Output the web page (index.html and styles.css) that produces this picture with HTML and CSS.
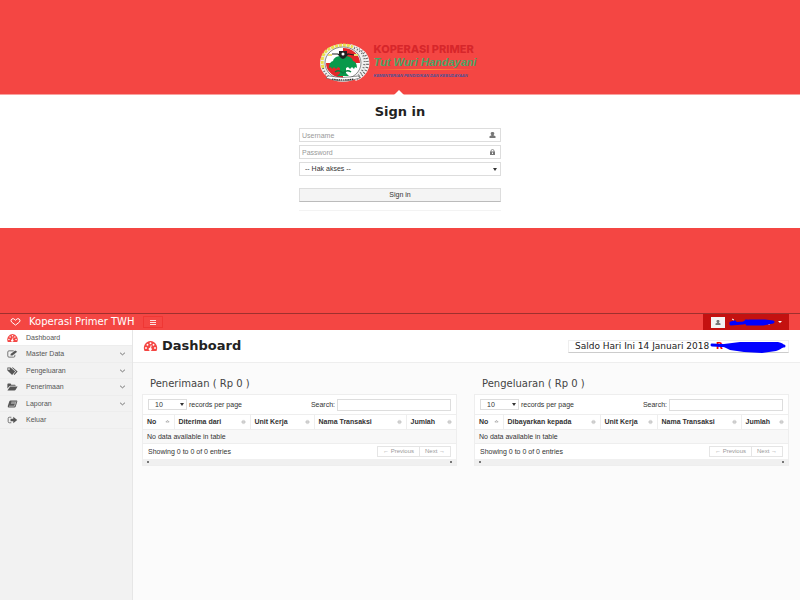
FILE: index.html
```html
<!DOCTYPE html>
<html lang="id">
<head>
<meta charset="utf-8">
<title>Koperasi Primer TWH</title>
<link rel="stylesheet" href="styles.css">
</head>
<body>
<svg class="defs" aria-hidden="true">
  <symbol id="gauge" viewBox="0 0 28 20"><path fill="currentColor" d="M14 0a14 14 0 0 0-12 20h24A14 14 0 0 0 14 0z"/><g fill="#fff"><circle cx="5" cy="14" r="1.900"/><circle cx="8" cy="7.500" r="1.900"/><circle cx="14" cy="4.500" r="1.900"/><circle cx="20" cy="7.500" r="1.900"/><circle cx="23" cy="14" r="1.900"/><path d="M14.500 8.500l2 .5-1.400 5a3 3 0 1 1-2-.5z"/></g></symbol>
  <symbol id="edit" viewBox="0 0 28 20"><path fill="none" stroke="currentColor" stroke-width="2" d="M17 2H5Q2 2 2 5v10q0 3 3 3h12q3 0 3-3v-3"/><path fill="currentColor" d="M9 14v-4L21 1l5 3-12 10z"/></symbol>
  <symbol id="tags" viewBox="0 0 28 20"><path fill="currentColor" fill-rule="evenodd" d="M1 1h8l12 10-8 9L1 9zM5 3a2 2 0 1 0 .1 0z"/><path fill="currentColor" d="M12 1h3l12 10-8 9-2-2 6-7z"/></symbol>
  <symbol id="folder" viewBox="0 0 28 20"><path fill="currentColor" d="M1 14V3q0-2 2-2h6l2 3h9q2 0 2 3H9q-2 0-3 1zM8 9h19l-5 8q-1 2-3 2H1z"/></symbol>
  <symbol id="book" viewBox="0 0 28 20"><path fill="currentColor" d="M9 1h16q2 1 1 3l-4 13q-1 2-3 2H5q-4 0-3-4L6 3q1-2 3-2z"/><path fill="none" stroke="#f2f2f2" stroke-width="1.500" d="M11 5h10M10 8h10M5 15.500h14L23 3"/></symbol>
  <symbol id="exit" viewBox="0 0 28 20"><path fill="none" stroke="currentColor" stroke-width="2" d="M11 3H6Q3 3 3 6v8q0 3 3 3h5"/><path fill="currentColor" d="M9 7h7V2l10 8-10 8v-5H9z"/></symbol>
  <symbol id="user" viewBox="0 0 14 12"><path fill="currentColor" d="M7 0c5 0 4 5 2 6v.5l4 2V12H1V8.500l4-2V6C3 5 2 0 7 0z"/></symbol>
  <symbol id="lock" viewBox="0 0 14 12"><path fill="none" stroke="currentColor" stroke-width="1.600" d="M4 6V4q0-3 3-3t3 3v2"/><path fill="currentColor" fill-rule="evenodd" d="M2 5h10v7H2zM6 7v3h2V7z"/></symbol>
  <symbol id="chevron" viewBox="0 0 8 5"><path fill="none" stroke="currentColor" d="M1 1l3 2.500L7 1"/></symbol>
  <symbol id="sort" viewBox="0 0 6 6"><path fill="none" stroke="#aaa" stroke-width=".7" d="M1 2.500L3 .5l2 2zM1 3.500l2 2 2-2z"/></symbol>
  <symbol id="asc" viewBox="0 0 6 6"><path fill="none" stroke="#999" stroke-width=".8" d="M1 3l2-2 2 2z"/></symbol>
</svg>

<section class="login">
  <header class="brand">
    <svg class="emblem" viewBox="0 0 50 40" role="img" aria-label="Tut Wuri Handayani">
      <defs><clipPath id="disc"><ellipse cx="23" cy="20" rx="17" ry="15"/></clipPath></defs>
      <path d="M30 3Q50 9 47 24q-3 9-12 12" fill="none" stroke="#f5f5f5" stroke-width="4"/>
      <path d="M30 3Q50 9 47 24q-3 9-12 12" fill="none" stroke="#666" stroke-width="3" stroke-dasharray="1 2"/>
      <ellipse cx="23" cy="20" rx="21.500" ry="17.500" fill="#eee" stroke="#eee" stroke-width="3"/>
      <path d="M3 25Q-1 8 14 4q9-4 19 0" fill="none" stroke="#eadf50" stroke-width="3" stroke-dasharray="3 1"/>
      <path d="M3 25q2 7 9 11M34 5q13 5 10 18-2 8-9 12" fill="none" stroke="#666" stroke-width="2" stroke-dasharray="1 2"/>
      <ellipse cx="23" cy="20" rx="18" ry="16" fill="#fff" stroke="#444" stroke-width=".6"/>
      <g clip-path="url(#disc)"><path fill="#e32629" d="M23 4h20v16H23zM4 20h19v17H4z"/></g>
      <path fill="#08994b" d="M16 14Q23 11 30 14Q33 16 33 18Q37 19 37 25L35 24L34 26L32 24L30 26L28 24L26 25V30L29 33H17L20 30V25L18 24L16 26L14 24L12 26L11 24L9 25Q9 19 13 18Q13 16 16 14Z"/>
      <path fill="none" stroke="#222" stroke-width="1.200" d="M12 11h6l2 2h6l2-2 6 1"/>
      <path fill="#222" d="M19 8h8v4q-1 3-4 4-3-1-4-4z"/><circle cx="23" cy="11" r="1.500" fill="#fff"/>
      <path fill="#eadf73" d="M8 11h4v2H8zm26 0h4v2h-4z"/>
      <path fill="none" stroke="#087f40" stroke-width="1.500" d="M15 29q4-3 8 1 4-4 8-1"/>
      <path fill="#fff" stroke="#555" stroke-width=".6" d="M8 33q15 3 30 0l2 2q-17 6-34 0z"/>
      <path fill="none" stroke="#222" stroke-width="1.200" stroke-dasharray="1.500 .7" d="M12 36q11 2 22 0"/>
    </svg>
    <div class="words">
      <div class="word-top">KOPERASI PRIMER</div>
      <div class="word-mid">Tut Wuri Handayani</div>
      <div class="word-line"></div>
      <div class="word-low">KEMENTERIAN PENDIDIKAN DAN KEBUDAYAAN</div>
    </div>
    <span class="notch"></span>
  </header>
  <form class="signin">
    <h1>Sign in</h1>
    <div class="field"><input type="text" placeholder="Username" aria-label="Username"><svg><use href="#user"/></svg></div>
    <div class="field"><input type="password" placeholder="Password" aria-label="Password"><svg><use href="#lock"/></svg></div>
    <div class="pick"><select class="role" aria-label="Hak akses"><option>-- Hak akses --</option></select></div>
    <button type="button" class="submit">Sign in</button>
    <hr>
  </form>
  <div class="band"></div>
</section>

<section class="app">
  <header class="topbar">
    <a class="home" href="#"><svg viewBox="0 0 12 9"><path fill="none" stroke="#fff" stroke-width="1.100" d="M6 8L1.500 4.500Q0 2 2 1q2-1 4 1.500Q8 0 10 1q2 1 .5 3.500z"/></svg>Koperasi Primer TWH</a>
    <button type="button" class="burger" aria-label="Menu"><span></span></button>
    <button type="button" class="account" aria-label="Akun">
      <span class="avatar"><svg><use href="#user"/></svg></span>
      <svg class="name-mark" viewBox="0 0 54 10"><path fill="none" stroke="#fff" stroke-width="1" d="M3 2l2 1M31 8v-3M40 8V5"/><path fill="none" stroke="#00f" stroke-width="3" stroke-linecap="round" stroke-linejoin="round" d="M2 6l4-1-4 2 12-1 7-2 15 0 8 1-10 2H18l14-2-15-1"/><path fill="#fff" d="M49 4h4l-2 2z"/></svg>
    </button>
  </header>
  <div class="body">
    <nav class="side">
      <a class="on" href="#"><svg><use href="#gauge"/></svg><span>Dashboard</span></a>
      <a href="#"><svg><use href="#edit"/></svg><span>Master Data</span><svg class="chev"><use href="#chevron"/></svg></a>
      <a href="#"><svg><use href="#tags"/></svg><span>Pengeluaran</span><svg class="chev"><use href="#chevron"/></svg></a>
      <a href="#"><svg><use href="#folder"/></svg><span>Penerimaan</span><svg class="chev"><use href="#chevron"/></svg></a>
      <a href="#"><svg><use href="#book"/></svg><span>Laporan</span><svg class="chev"><use href="#chevron"/></svg></a>
      <a href="#"><svg><use href="#exit"/></svg><span>Keluar</span></a>
    </nav>
    <main>
      <div class="title">
        <h2><svg><use href="#gauge"/></svg>Dashboard</h2>
        <div class="saldo"><span>Saldo Hari Ini 14 Januari 2018</span><span class="sum"><b>R</b><svg viewBox="0 0 78 12"><path fill="none" stroke="#00f" stroke-width="3" stroke-linecap="round" d="M2 4l20 1 48 0 4 0"/><path fill="#00f" d="M14 3l16-2 38 0q6 1 6 4-2 3-8 5l-14 2-18-1-14-2-8-4z"/></svg></span></div>
      </div>
      <div class="panels">
        <section class="panel">
          <h3>Penerimaan ( Rp 0 )</h3>
          <div class="card">
            <div class="tools"><label class="length"><select><option>10</option></select>records per page</label><label>Search:<input type="text"></label></div>
            <table>
              <colgroup><col class="a1"><col class="a2"><col class="a3"><col class="a4"><col></colgroup>
              <thead><tr><th>No<svg><use href="#asc"/></svg></th><th>Diterima dari<svg><use href="#sort"/></svg></th><th>Unit Kerja<svg><use href="#sort"/></svg></th><th>Nama Transaksi<svg><use href="#sort"/></svg></th><th>Jumlah<svg><use href="#sort"/></svg></th></tr></thead>
              <tbody><tr><td colspan="5">No data available in table</td></tr></tbody>
            </table>
            <div class="foot"><span>Showing 0 to 0 of 0 entries</span><div class="pager"><button type="button">← Previous</button><button type="button">Next →</button></div></div>
            <div class="scroll"><i></i><i></i></div>
          </div>
        </section>
        <section class="panel">
          <h3>Pengeluaran ( Rp 0 )</h3>
          <div class="card">
            <div class="tools"><label class="length"><select><option>10</option></select>records per page</label><label>Search:<input type="text"></label></div>
            <table>
              <colgroup><col class="b1"><col class="b2"><col class="b3"><col class="b4"><col></colgroup>
              <thead><tr><th>No<svg><use href="#asc"/></svg></th><th>Dibayarkan kepada<svg><use href="#sort"/></svg></th><th>Unit Kerja<svg><use href="#sort"/></svg></th><th>Nama Transaksi<svg><use href="#sort"/></svg></th><th>Jumlah<svg><use href="#sort"/></svg></th></tr></thead>
              <tbody><tr><td colspan="5">No data available in table</td></tr></tbody>
            </table>
            <div class="foot"><span>Showing 0 to 0 of 0 entries</span><div class="pager"><button type="button">← Previous</button><button type="button">Next →</button></div></div>
            <div class="scroll"><i></i><i></i></div>
          </div>
        </section>
      </div>
    </main>
  </div>
</section>
</body>
</html>
```
FILE: styles.css
```css
* { box-sizing: border-box; }
body {
  margin: 0;
  min-height: 100vh;
  display: flex;
  flex-direction: column;
  background: #fff;
  color: #333;
  font: 7px/10px "Liberation Sans", Arial, sans-serif;
}
h1, h2, h3 { margin: 0; color: #222; font-family: "DejaVu Sans", sans-serif; }
button, input, select { font: inherit; color: inherit; margin: 0; border-radius: 0; }
input, select { border: 1px solid #ddd; background: #fff; outline: 0; }
select { appearance: none; }
a { color: inherit; text-decoration: none; }
svg { display: block; flex: none; }
.defs { position: absolute; width: 0; height: 0; }

/* Login */
.brand {
  position: relative;
  display: flex;
  justify-content: center;
  gap: 4px;
  padding: 43px 0 11px;
  background: #f44643;
  border-bottom: 1px solid #f9a19f;
}
.emblem { width: 50px; height: 40px; }
.words { width: 107px; white-space: nowrap; }
.word-top { color: #d7262b; font: 800 11px/13px Inter, sans-serif; }
.word-mid { color: #4ba567; font: italic bold 11px/12px "Liberation Sans", sans-serif; }
.word-line { width: 102px; height: 1px; margin: 1px 0 3px; background: linear-gradient(90deg, #f44643, #ff9a35, #f44643); }
.word-low { color: #41549c; font: italic bold 4px/6px "Liberation Sans", sans-serif; }
.notch {
  position: absolute;
  bottom: -1px;
  left: 50%;
  margin-left: -6px;
  border: solid transparent;
  border-width: 0 5px 5px;
  border-bottom-color: #fff;
}
.signin {
  width: 202px;
  margin: 0 auto;
  padding: 8px 0 17px;
}
.signin h1 { font-size: 13px; line-height: 17px; text-align: center; margin-bottom: 8px; }
.field { position: relative; margin-bottom: 3px; }
.field input { display: block; width: 100%; height: 14px; padding: 0 2px; }
.field input::placeholder { color: #999; }
.field svg { position: absolute; right: 5px; top: 4px; width: 7px; height: 6px; color: #777; }
.role { display: block; width: 100%; height: 14px; padding: 0 5px; }
.pick, .length { position: relative; }
.submit { display: block; width: 100%; height: 14px; margin: 12px 0 8px; padding: 0; border: 1px solid #ddd; border-bottom-color: #bbb; background: #f4f4f4; }
.signin hr { margin: 0; border: 0; border-top: 1px solid #f3f3f3; }
.band { height: 85px; background: #f44643; }

/* Dashboard */
.app { flex: 1; display: flex; flex-direction: column; }
.topbar {
  display: flex;
  align-items: stretch;
  height: 17px;
  padding-right: 11px;
  background: #f44643;
  border-top: 1px solid #9e302e;
}
.home { display: flex; align-items: center; gap: 8px; padding-left: 10px; color: #fff; font: 10px/16px "DejaVu Sans", sans-serif; }
.home svg { width: 11px; height: 8px; }
.burger { width: 20px; height: 12px; margin: 2px 0 0 8px; padding: 0 6px; border: 1px solid #ef3734; background: none; }
.burger span { display: block; height: 5px; border: solid #ffe0df; border-width: 1px 0; background: linear-gradient(#ffe0df, #ffe0df) center / 100% 1px no-repeat; }
.account { display: flex; align-items: center; gap: 4px; margin-left: auto; width: 86px; padding: 0 0 0 8px; border: 0; background: #c41110; }
.avatar { width: 14px; height: 11px; padding: 3px 4px; background: #f4f4f4; color: #777; }
.avatar svg { width: 6px; height: 5px; }
.name-mark { width: 54px; height: 10px; }

.body { flex: 1; display: flex; }
.side { width: 133px; background: #f2f2f2; border-right: 1px solid #e6e6e6; }
.side a { display: flex; align-items: center; gap: 8px; height: 16px; padding: 0 6px 0 7px; border-bottom: 1px solid #ededed; color: #555; }
.side a:nth-child(even) { height: 17px; }
.side svg { width: 11px; height: 8px; }
.side .on { background: #fff; }
.side .on svg { color: #f44643; }
.side .chev { width: 7px; height: 4px; margin-left: auto; }
main { flex: 1; min-width: 0; background: #fbfbfb; }
.title { display: flex; align-items: center; justify-content: space-between; height: 33px; padding: 0 11px 0 10px; background: #fff; border-bottom: 1px solid #eee; }
.title h2 { display: flex; align-items: center; gap: 4px; font-size: 13px; line-height: 16px; }
.title h2 svg { width: 15px; height: 10px; color: #f44643; }
.saldo { display: flex; align-items: center; width: 221px; height: 13px; padding-left: 6px; border: 1px solid #eee; border-bottom-color: #ccc; color: #222; white-space: nowrap; font: 9px/11px "DejaVu Sans", sans-serif; }
.saldo b { color: #e00; }
.sum { position: relative; width: 78px; height: 11px; margin-left: auto; padding-left: 6px; }
.sum svg { position: absolute; left: 0; top: 0; width: 78px; height: 12px; }
.panels { display: grid; grid-template-columns: 1fr 1fr; gap: 17px; padding: 14px 11px 0 9px; }
.panel h3 { margin-bottom: 3px; padding: 0 8px; color: #444; font-size: 10px; line-height: 14px; font-weight: normal; }
.card { background: #fff; border: 1px solid #eee; }
.tools { display: flex; align-items: center; justify-content: space-between; height: 19px; padding: 0 5px; }
.tools label { display: flex; align-items: center; gap: 2px; }
.tools select { width: 39px; height: 11px; padding: 0 6px; line-height: 9px; }
.tools input { width: 114px; height: 12px; }
.length { gap: 3px; }
.pick::after, .length::after {
  content: "";
  position: absolute;
  right: 4px;
  top: 6px;
  border: solid transparent;
  border-width: 3px 2px 0;
  border-top-color: #333;
  pointer-events: none;
}
.length::after { left: 32px; right: auto; top: 4px; }
table { width: 100%; table-layout: fixed; border-collapse: collapse; }
th, td { padding: 0 4px; border-top: 1px solid #eee; text-align: left; white-space: nowrap; }
th { height: 15px; line-height: 14px; border-left: 1px solid #eee; }
th:first-child { border-left: 0; }
th svg { float: right; width: 5px; height: 6px; margin-top: 4px; }
td { height: 14px; line-height: 13px; background: #f8f8f8; border-bottom: 1px solid #eee; }
.a1 { width: 31px; } .a2 { width: 76px; } .a3 { width: 64px; } .a4 { width: 92px; }
.b1 { width: 28px; } .b2 { width: 97px; } .b3 { width: 57px; } .b4 { width: 84px; }
.foot { display: flex; align-items: center; justify-content: space-between; height: 15px; padding: 0 5px; }
.pager { display: flex; }
.pager button { height: 11px; padding: 0 5px; border: 1px solid #e5e5e5; background: #fff; color: #999; font-size: 6px; line-height: 9px; }
.pager button + button { border-left: 0; }
.scroll { display: flex; justify-content: space-between; align-items: center; height: 6px; padding: 0 4px; background: #f0f0f0; }
.scroll i { width: 2px; height: 2px; background: #777; }
```
